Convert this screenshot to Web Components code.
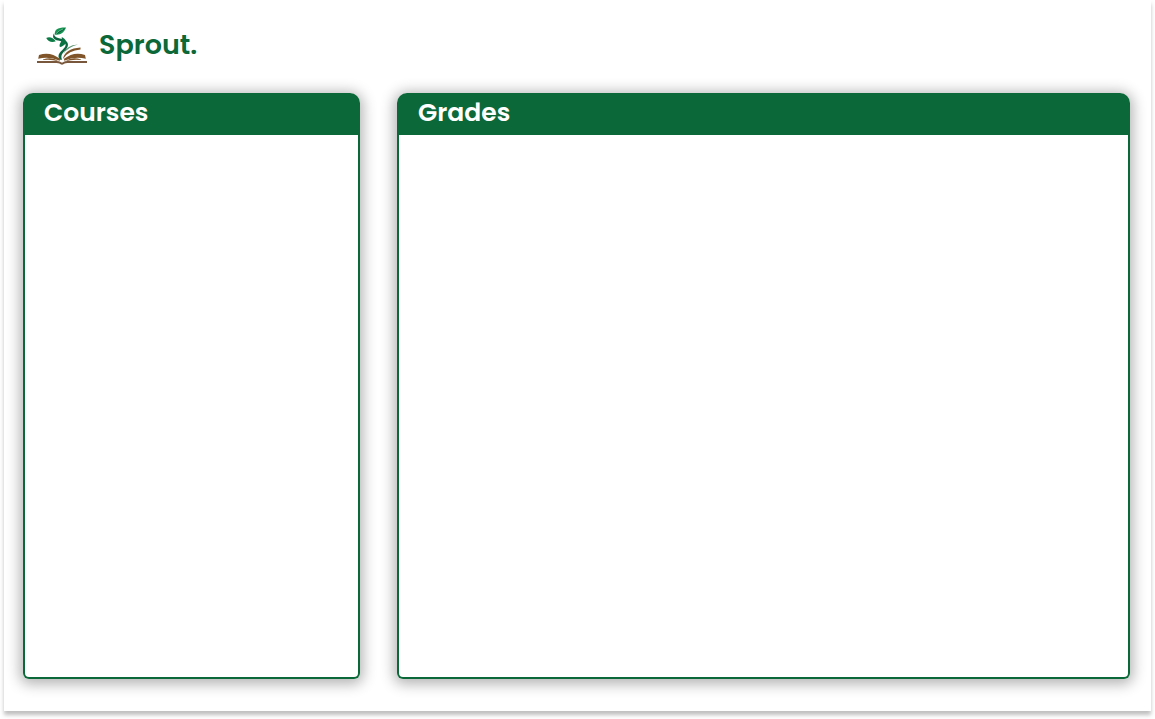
<!DOCTYPE html>
<html lang="en">
<head>
<meta charset="utf-8">
<meta name="viewport" content="width=device-width, initial-scale=1">
<title>Sprout.</title>
<style>
  :root { --green: #0b6839; }
  body { margin: 0; background: #fff; font-family: Poppins, Inter, "Open Sans", sans-serif; }
</style>
</head>
<body>
<sprout-app>
  <sprout-brand slot="brand">Sprout.</sprout-brand>
  <sprout-panel><span slot="title">Courses</span></sprout-panel>
  <sprout-panel><span slot="title">Grades</span></sprout-panel>
</sprout-app>

<script>
const define = (name, html) => {
  const template = document.createElement("template");
  template.innerHTML = html;
  customElements.define(name, class extends HTMLElement {
    constructor() {
      super();
      this.attachShadow({ mode: "open" }).append(template.content.cloneNode(true));
    }
  });
};

define("sprout-app", `
  <style>
    :host { display: flex; box-sizing: border-box; min-height: 100vh; padding: 0 4px 8px; }
    .page {
      flex: 1; box-sizing: border-box; display: flex; flex-direction: column;
      padding: 24px 21px 32px 19px; background: #fff;
      box-shadow: 0 4px 4px rgba(0, 0, 0, .25);
    }
    header { padding: 0 14px 27px; }
    main { flex: 1; display: grid; grid-template-columns: 337fr 733fr; gap: 37px; }
  </style>
  <div class="page">
    <header><slot name="brand"></slot></header>
    <main><slot></slot></main>
  </div>`);

define("sprout-brand", `
  <style>
    :host { display: flex; align-items: center; gap: 12px; color: var(--green); }
    h1 { margin: 0; font-size: 27px; line-height: 42px; font-weight: 600; }
  </style>
  <sprout-logo></sprout-logo>
  <h1><slot></slot></h1>`);

define("sprout-logo", `
  <style>
    :host { display: block; }
    svg { display: block; width: 50px; height: 42px; }
  </style>
  <svg viewBox="0 0 50 42" aria-hidden="true">
    <g fill="#80552a">
      <path d="M2 31Q13 27 23 34.8L22.8 36.8Q12 31.8 1.2 34.8Z"/>
      <path d="M48 31Q37 27 27 34.8L27.2 36.8Q38 31.8 48.8 34.8Z"/>
      <path d="M26 34.5Q28.5 24.6 43.5 23.6V25.6Q31.5 26.6 26.5 34.5Z"/>
      <path d="M6 35.4Q15 32.4 21.5 37.2Q14 35 6 36ZM44 35.4Q35 32.4 28.5 37.2Q36 35 44 36Z"/>
    </g>
    <path d="M0 38H19.5Q22 38 23 38.8Q25 40.4 27 38.8Q28 38 30.5 38H50" fill="none" stroke="#79573c" stroke-width="2"/>
    <path d="M26.7 29.5Q29 21.4 41 20.6Q31 23.4 26.7 29.5Z" fill="#5c9472"/>
    <path d="M23.2 35.8C18.4 30.6 25 27 27.6 23.5C30.2 19.8 28 17.9 21 16.5C16.4 15.6 14.8 12.8 17.1 9.2C17 12.2 18.5 13.4 22 14.2C30.8 16 32.6 19.8 29.8 24.3C27 28.5 22.8 30 25 35.8Z" fill="#0d6540"/>
    <path d="M17.8 10.5C17.3 5.8 20.5 3.3 29 3.5C26.7 9.5 22.5 11.4 17.8 10.5Z" fill="#159452"/>
    <path d="M18 10.2Q23 6.2 28.7 3.7Q23.5 9 18 10.2Z" fill="#075d37"/>
    <path d="M9.2 13.9Q14.5 11.8 18.8 17.3Q12.4 19.5 9.2 13.9Z" fill="#0c7b46"/>
    <path d="M24.8 13.1C29 15.5 30.3 18.2 27.3 20.9C25.8 21.6 25 22.9 22.9 22.9C21.5 20 25.2 18.4 24.8 13.1Z" fill="#0b7343"/>
    <path d="M19 9.8Q22 6.4 26 5" fill="none" stroke="#e7fff0" stroke-width=".4"/>
  </svg>`);

define("sprout-panel", `
  <style>
    :host {
      display: flex; min-width: 0; border-radius: 10px 10px 6px 6px;
      box-shadow: 0 2px 14px 3px rgba(0, 0, 0, .3);
    }
    section { flex: 1; display: flex; flex-direction: column; }
    h2 {
      margin: 0; padding: 2px 21px 4px; background: var(--green); color: #fff;
      border-radius: 10px 10px 0 0; font-size: 25px; line-height: 36px; font-weight: 600;
    }
    .body {
      flex: 1; border: 2px solid var(--green); border-top: 0;
      border-radius: 0 0 6px 6px; background: #fff;
    }
  </style>
  <section>
    <h2><slot name="title"></slot></h2>
    <div class="body"><slot></slot></div>
  </section>`);
</script>
</body>
</html>
